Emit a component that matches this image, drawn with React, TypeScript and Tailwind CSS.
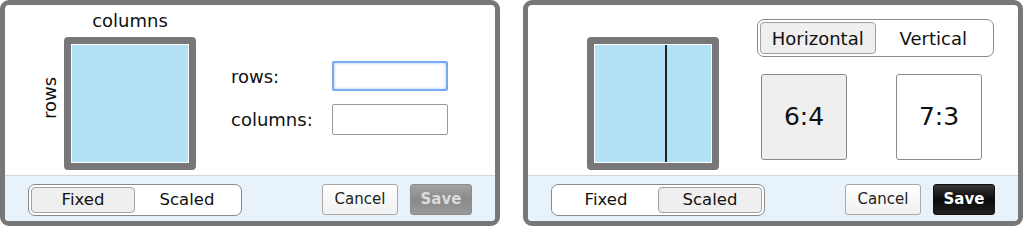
import { useState } from 'react';

const font = { fontFamily: '"DejaVu Sans", Verdana, sans-serif' };

function Toggle({ options, value, onChange, className }: { options: string[]; value: string; onChange: (v: string) => void; className: string }) {
    return (
        <div className={`flex p-[2px] bg-white border-[1.5px] border-[#8a8a8a] rounded-[7px] ${className}`}>
            {options.map((o) => (
                <button
                    key={o}
                    onClick={() => onChange(o)}
                    className={`flex-1 flex items-center justify-center rounded-[4px] text-[#111] ${
                        value === o ? 'bg-[#efefef] border border-[#a0a0a0]' : 'border border-transparent'
                    }`}
                >
                    {o}
                </button>
            ))}
        </div>
    );
}

function Footer({ disabled }: { disabled: boolean }) {
    const [mode, setMode] = useState(disabled ? 'Fixed' : 'Scaled');
    return (
        <div className="h-[46px] bg-[#e8f2fb] border-t border-[#cfd6dc] flex items-start pt-[8px] pl-[23px] pr-[23px] rounded-b-[4px]">
            <Toggle options={['Fixed', 'Scaled']} value={mode} onChange={setMode} className="w-[214px] h-[32px] text-[16.5px]" />
            <div className="ml-auto flex gap-[12px]">
                <button className="w-[76px] h-[31px] rounded-[3px] border border-[#a9a9a9] bg-gradient-to-b from-white to-[#f1f1f1] text-[15px] text-[#222]">
                    Cancel
                </button>
                {disabled ? (
                    <button className="w-[62px] h-[31px] rounded-[3px] border border-[#8c8c8c] bg-gradient-to-b from-[#a3a3a3] via-[#8a8a8a] to-[#9a9a9a] text-[15px] text-[#dcdcdc] font-semibold">
                        Save
                    </button>
                ) : (
                    <button className="w-[62px] h-[31px] rounded-[3px] border border-[#111] bg-gradient-to-b from-[#3a3a3a] via-[#0a0a0a] to-[#222] text-[15px] text-white font-semibold">
                        Save
                    </button>
                )}
            </div>
        </div>
    );
}

function Preview({ split }: { split?: number }) {
    return (
        <div className="w-[132px] h-[133px] border-[7px] border-[#777] rounded-[4px] bg-white p-px">
            <div className="w-full h-full bg-[#b3e1f5] flex">
                {split !== undefined && (
                    <>
                        <div style={{ width: `${split * 100}%` }} />
                        <div className="w-[2px] h-full bg-[#222]" />
                    </>
                )}
            </div>
        </div>
    );
}

export default function App() {
    const [dir, setDir] = useState('Horizontal');
    const [ratio, setRatio] = useState('6:4');
    return (
        <div className="flex gap-[23px] bg-white w-[1024px] h-[227px] text-[#111]" style={font}>
            <div className="w-[500px] h-[226px] border-[5px] border-[#777] rounded-[9px] flex flex-col">
                <div className="flex-1 flex items-start">
                    <div className="w-[20px] ml-[35px] mt-[68px] h-[50px] flex items-center justify-center">
                        <span className="-rotate-90 text-[18px] leading-none whitespace-nowrap">rows</span>
                    </div>
                    <div className="ml-[4px] flex flex-col items-center">
                        <div className="h-[32px] flex items-center text-[18px] leading-none">columns</div>
                        <Preview />
                    </div>
                    <div className="ml-[35px] mt-[56px] grid grid-cols-[101px_116px] gap-y-[13px] items-center text-[18px]">
                        <span>rows:</span>
                        <input className="h-[30px] border-2 border-[#7aa9f0] rounded-[2px] outline-none shadow-[inset_0_0_3px_#9fc3f7]" />
                        <span>columns:</span>
                        <input className="h-[31px] border border-[#9a9a9a] rounded-[2px] outline-none" />
                    </div>
                </div>
                <Footer disabled />
            </div>
            <div className="w-[500px] h-[226px] border-[5px] border-[#777] rounded-[9px] flex flex-col">
                <div className="flex-1 flex items-start">
                    <div className="ml-[59px] mt-[32px]">
                        <Preview split={ratio === '6:4' ? 0.6 : 0.7} />
                    </div>
                    <div className="ml-[38px] mt-[14px] flex flex-col">
                        <Toggle options={['Horizontal', 'Vertical']} value={dir} onChange={setDir} className="w-[237px] h-[38px] text-[18px]" />
                        <div className="mt-[17px] ml-[4px] flex gap-[49px]">
                            {['6:4', '7:3'].map((r) => (
                                <button
                                    key={r}
                                    onClick={() => setRatio(r)}
                                    className={`w-[86px] h-[86px] rounded-[3px] border-[1.5px] border-[#8a8a8a] text-[25px] ${
                                        ratio === r ? 'bg-[#efefef]' : 'bg-white'
                                    }`}
                                >
                                    {r}
                                </button>
                            ))}
                        </div>
                    </div>
                </div>
                <Footer disabled={false} />
            </div>
        </div>
    );
}
